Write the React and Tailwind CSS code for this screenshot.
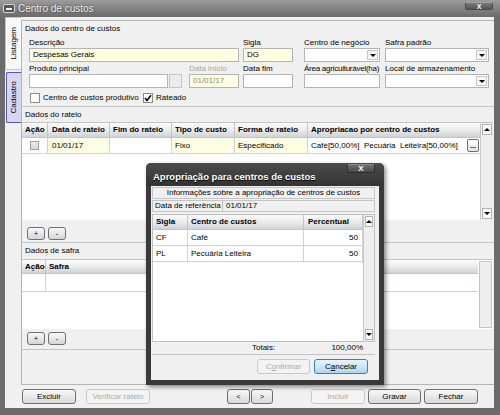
import React from "react"

const HEAD = "bg-linear-to-b from-[#fbfbfb] via-[#ececec] to-[#cdd3d9]"

function Tri({ up }) {
    return up
        ? <div className="w-0 h-0 border-x-[3px] border-x-transparent border-b-[3px] border-b-black" />
        : <div className="w-0 h-0 border-x-[3px] border-x-transparent border-t-[3px] border-t-black" />
}

function Input({ w, yellow, gray, children }) {
    return <div className={`${w} h-[14px] border border-[#b4b4b4] flex items-center px-[3px] ${yellow ? "bg-[#ffffe0]" : "bg-white"} ${gray ? "text-[#8a8a8a]" : ""}`}>
        {children}
    </div>
}

function Select({ w }) {
    return <div className={`${w} h-[14px] border border-[#b4b4b4] bg-white flex items-center justify-end p-[1px]`}>
        <div className="w-[11px] h-full border border-[#c8c8c8] bg-[#f6f6f6] flex items-center justify-center">
            <Tri />
        </div>
    </div>
}

function Field({ w, label, muted, tight, className = "", children }) {
    return <div className={`${w} flex flex-col ${className}`}>
        <div className={`h-[10px] leading-[10px] whitespace-nowrap ${muted ? "text-[#a4a4a4]" : ""} ${tight ? "tracking-[-0.25px]" : ""}`}>{label}</div>
        {children}
    </div>
}

function Check({ checked }) {
    return <div className="w-[10px] h-[10px] border border-[#8c8c8c] bg-white flex items-center justify-center">
        {checked && <svg width="8" height="8" viewBox="0 0 8 8"><path d="M1 4 L3 6.5 L7 1.2" stroke="black" strokeWidth="1.6" fill="none" /></svg>}
    </div>
}

function Btn({ w, disabled, className = "", children }) {
    return <div className={`${w} h-[15px] rounded-[3px] border flex items-center justify-center ${disabled ? "border-[#c9c9c9] text-[#ababab] bg-[#f3f3f3]" : "border-[#6f6f6f] bg-linear-to-b from-[#f8f8f8] to-[#d9d9d9]"} ${className}`}>
        {children}
    </div>
}

function SmallBtn({ children }) {
    return <div className="w-[18px] h-[13px] rounded-[3px] border border-[#6f6f6f] bg-linear-to-b from-[#f8f8f8] to-[#d6d6d6] flex items-center justify-center text-[7px]">
        {children}
    </div>
}

function Scroll({ arrows = true }) {
    return <div className="flex-1 border-l border-[#c8c8c8] bg-[#eeeeee] flex flex-col justify-between p-[1px]">
        {arrows && <>
            <div className="h-[11px] border border-[#b4b4b4] bg-[#f9f9f9] flex items-center justify-center"><Tri up /></div>
            <div className="h-[11px] border border-[#b4b4b4] bg-[#f9f9f9] flex items-center justify-center"><Tri /></div>
        </>}
    </div>
}

function Th({ w, children, className = "" }) {
    return <div className={`${w} h-full flex items-center px-[3px] border-r border-[#c4c4c4] font-bold whitespace-nowrap ${className}`}>{children}</div>
}

function Td({ w, yellow, children, className = "" }) {
    return <div className={`${w} h-full flex items-center px-[3px] border-r border-[#d2d2d2] whitespace-pre ${yellow ? "bg-[#fdfde3]" : "bg-white"} ${className}`}>{children}</div>
}

function SectionTitle({ children, h = "h-[15px]" }) {
    return <div className={`${h} flex items-center pl-[3px]`}>{children}</div>
}

function TabStrip() {
    return <div className="w-[16px] flex flex-col">
        <div className="h-[53px] bg-[#f8f8f8] border border-r-0 border-[#c4c4c4] flex items-center justify-center">
            <span className="[writing-mode:vertical-rl] rotate-180 whitespace-nowrap">Listagem</span>
        </div>
        <div className="ml-[1px] mt-[2px] h-[51px] bg-[#d6d6ef] border border-r-0 border-[#5555b3] rounded-l-[2px] flex items-center justify-center">
            <span className="[writing-mode:vertical-rl] rotate-180 whitespace-nowrap">Cadastro</span>
        </div>
    </div>
}

function Modal() {
    return <div className="absolute left-[146px] top-[163px] w-[238px] h-[222px] bg-[#3a3a3a] rounded-t-[5px] flex flex-col shadow-[2px_2px_4px_rgba(0,0,0,0.45)]">
        <div className="h-[23px] flex items-start rounded-t-[5px] bg-linear-to-b from-[#4c4c4c] to-[#333333]">
            <span className="ml-[7px] mt-[8px] text-[9.5px] font-bold text-white leading-[11px] [text-shadow:0_1px_1px_#000]">Apropriação para centros de custos</span>
            <div className="ml-auto mr-[9px] mt-[1px] w-[28px] h-[9px] rounded-[2px] border border-t-[#8c8c8c] border-[#2a2a2a] bg-linear-to-b from-[#6e6e6e] to-[#4a4a4a] flex items-center justify-center text-white font-bold text-[8px]">X</div>
        </div>
        <div className="flex-1 mx-[5px] mb-[5px] bg-[#f0f0f0] flex flex-col pl-[1px] pr-[4px] pt-[1px]">
            <div className="h-[12px] border border-[#c4c4c4] flex items-center justify-center whitespace-nowrap">Informações sobre a apropriação de centros de custos</div>
            <div className="mt-[1px] h-[12px] flex border border-[#c4c4c4]">
                <div className="w-[70px] border-r border-[#c4c4c4] flex items-center px-[2px] whitespace-nowrap">Data de referência</div>
                <div className="flex-1 flex items-center px-[3px]">01/01/17</div>
            </div>
            <div className="mt-[2px] h-[128px] border border-[#c0c0c0] bg-white flex">
                <div className="w-[210px] flex flex-col">
                    <div className={`h-[15px] flex border-b border-[#c4c4c4] ${HEAD}`}>
                        <Th w="w-[35px]" className="px-[2px]">Sigla</Th>
                        <Th w="w-[116px]">Centro de custos</Th>
                        <Th w="w-[59px]" className="px-[4px]">Percentual</Th>
                    </div>
                    <div className="h-[16px] flex border-b border-[#d2d2d2]">
                        <Td w="w-[35px]" className="px-[2px]">CF</Td>
                        <Td w="w-[116px]">Café</Td>
                        <Td w="w-[59px]" className="justify-end px-[4px]">50</Td>
                    </div>
                    <div className="h-[16px] flex border-b border-[#d2d2d2]">
                        <Td w="w-[35px]" className="px-[2px]">PL</Td>
                        <Td w="w-[116px]">Pecuária Leiteira</Td>
                        <Td w="w-[59px]" className="justify-end px-[4px]">50</Td>
                    </div>
                </div>
                <Scroll />
            </div>
            <div className="h-[13px] flex items-center border-b border-[#c4c4c4]">
                <span className="ml-[100px]">Totais:</span>
                <span className="ml-auto mr-[12px]">100,00%</span>
            </div>
            <div className="mt-[4px] flex">
                <Btn w="w-[53px]" disabled className="ml-[105px]">C<u>o</u>nfirmar</Btn>
                <div className="ml-[4px] w-[54px] h-[15px] rounded-[3px] border border-[#3c7fb1] bg-linear-to-b from-[#e8f5fd] to-[#a9d8f4] flex items-center justify-center">C<u>a</u>ncelar</div>
            </div>
        </div>
    </div>
}

export default function App() {
    return <div className="relative w-[500px] h-[415px] overflow-hidden bg-[#6b6b6b] flex flex-col font-['Liberation_Sans',Arial,sans-serif] text-[8px] leading-none text-black">
        {/* window title */}
        <div className="h-[17px] shrink-0 flex items-center pl-[3px] pr-[7px] bg-linear-to-b from-[#9c9c9c] to-[#6b6b6b]">
            <div className="w-[12px] h-[9px] rounded-[2px] border border-[#d8d8d8] bg-[#555] flex items-center justify-center">
                <div className="w-[6px] h-[2px] bg-[#eee]" />
            </div>
            <span className="ml-[3px] text-[10px] text-[#f4f4f4] [text-shadow:0_0_2px_#222]">Centro de custos</span>
            <div className="ml-auto self-start mt-[2px] w-[28px] h-[8px] rounded-[2px] border border-[#4a4a4a] border-t-[#a0a0a0] bg-linear-to-b from-[#7a7a7a] to-[#555] flex items-center justify-center text-white font-bold text-[7px]">X</div>
        </div>

        <div className="flex-1 ml-[5px] mr-[6px] mb-[7px] bg-[#f0f0f0] flex flex-col">
            <div className="h-[368px] flex">
                <TabStrip />
                <div className="flex-1 mt-[3px] border-l border-t border-b border-[#b5b5b5] flex flex-col">
                    <SectionTitle>Dados do centro de custos</SectionTitle>

                    {/* campos */}
                    <div className="h-[71px] pt-[2px] pl-[7px] flex flex-col border-b border-[#c4c4c4]">
                        <div className="flex">
                            <Field w="w-[210px]" label="Descrição"><Input w="w-full" yellow>Despesas Gerais</Input></Field>
                            <Field w="w-[50px]" label="Sigla" className="ml-[4px]"><Input w="w-full" yellow>DG</Input></Field>
                            <Field w="w-[76px]" label="Centro de negócio" className="ml-[11px]"><Select w="w-full" /></Field>
                            <Field w="w-[104px]" label="Safra padrão" className="ml-[5px]"><Select w="w-full" /></Field>
                        </div>
                        <div className="flex mt-[2px]">
                            <Field w="w-[153px]" label="Produto principal">
                                <div className="flex">
                                    <Input w="w-[139px]" />
                                    <div className="ml-[1px] w-[13px] h-[14px] border border-[#c4c4c4] bg-[#ececec]" />
                                </div>
                            </Field>
                            <Field w="w-[50px]" label="Data início" muted className="ml-[7px]"><Input w="w-full" yellow gray>01/01/17</Input></Field>
                            <Field w="w-[50px]" label="Data fim" className="ml-[4px]"><Input w="w-full" /></Field>
                            <Field w="w-[76px]" label="Área agriculturável(ha)" tight className="ml-[11px]"><Input w="w-full" /></Field>
                            <Field w="w-[104px]" label="Local de armazenamento" className="ml-[5px]"><Select w="w-full" /></Field>
                        </div>
                        <div className="mt-[4px] h-[12px] flex items-center">
                            <div className="w-[113px] flex items-center ml-[1px]">
                                <Check />
                                <span className="ml-[3px]">Centro de custos produtivo</span>
                            </div>
                            <Check checked />
                            <span className="ml-[3px]">Rateado</span>
                        </div>
                    </div>

                    {/* rateio */}
                    <SectionTitle>Dados do rateio</SectionTitle>
                    <div className="h-[98px] mr-[1px] border-t border-[#c4c4c4] bg-white flex">
                        <div className="w-[458px] flex flex-col">
                            <div className={`h-[15px] flex border-b border-[#c4c4c4] ${HEAD}`}>
                                <Th w="w-[26px]" className="px-[2px]">Ação</Th>
                                <Th w="w-[62px]" className="pl-[4px]">Data de rateio</Th>
                                <Th w="w-[62px]">Fim do rateio</Th>
                                <Th w="w-[63px]">Tipo de custo</Th>
                                <Th w="w-[73px]">Forma de rateio</Th>
                                <Th w="flex-1" className="border-r-0">Apropriacao por centro de custos</Th>
                            </div>
                            <div className="h-[16px] flex border-b border-[#d2d2d2]">
                                <Td w="w-[26px]" className="justify-center">
                                    <div className="w-[9px] h-[9px] border border-[#a0a0a0] bg-linear-to-b from-[#eeeeee] to-[#d4d4d4]" />
                                </Td>
                                <Td w="w-[62px]" yellow className="pl-[4px]">01/01/17</Td>
                                <Td w="w-[62px]" />
                                <Td w="w-[63px]" yellow>Fixo</Td>
                                <Td w="w-[73px]" yellow>Especificado</Td>
                                <Td w="flex-1" className="border-r-0 pr-[1px]">
                                    <span>Café[50,00%]  Pecuária  Leiteira[50,00%]</span>
                                    <div className="ml-auto w-[12px] h-[13px] rounded-[2px] border border-[#6f6f6f] bg-linear-to-b from-white to-[#e2e2e2] flex items-center justify-center font-bold text-[7px] leading-[5px]">...</div>
                                </Td>
                            </div>
                        </div>
                        <Scroll />
                    </div>
                    <div className="h-[23px] pt-[7px] pl-[5px] flex items-start gap-[3px] border-b border-[#c4c4c4]">
                        <SmallBtn>+</SmallBtn>
                        <SmallBtn>-</SmallBtn>
                    </div>

                    {/* safra */}
                    <SectionTitle h="h-[16px]">Dados de safra</SectionTitle>
                    <div className="h-[70px] mr-[1px] border-t border-[#c4c4c4] bg-white flex">
                        <div className="w-[456px] flex flex-col">
                            <div className={`h-[14px] flex border-b border-[#c4c4c4] ${HEAD}`}>
                                <Th w="w-[24px]" className="px-[2px]">Ação</Th>
                                <Th w="flex-1" className="border-r-0">Safra</Th>
                            </div>
                            <div className="h-[18px] flex border-b border-[#d2d2d2]">
                                <Td w="w-[24px]" />
                                <Td w="flex-1" className="border-r-0" />
                            </div>
                        </div>
                        <div className="flex-1 flex p-[1px]">
                            <div className="flex-1 border border-[#c4c4c4] bg-[#eeeeee]" />
                        </div>
                    </div>
                    <div className="h-[21px] pt-[3px] pl-[5px] flex items-start gap-[3px] border-b border-[#c4c4c4]">
                        <SmallBtn>+</SmallBtn>
                        <SmallBtn>-</SmallBtn>
                    </div>
                    <div className="flex-1" />
                </div>
            </div>

            {/* toolbar */}
            <div className="h-[23px] pt-[4px] pl-[17px] flex items-start">
                <Btn w="w-[54px]">Excluir</Btn>
                <Btn w="w-[64px]" disabled className="ml-[10px]">Verificar rateio</Btn>
                <Btn w="w-[23px]" className="ml-[77px] text-[7px]">&lt;</Btn>
                <Btn w="w-[22px]" className="ml-[1px] text-[7px]">&gt;</Btn>
                <Btn w="w-[54px]" disabled className="ml-[38px]">Incluir</Btn>
                <Btn w="w-[53px]" className="ml-[3px]">Gravar</Btn>
                <Btn w="w-[54px]" className="ml-[3px]">Fechar</Btn>
            </div>
        </div>

        <Modal />
    </div>
}
